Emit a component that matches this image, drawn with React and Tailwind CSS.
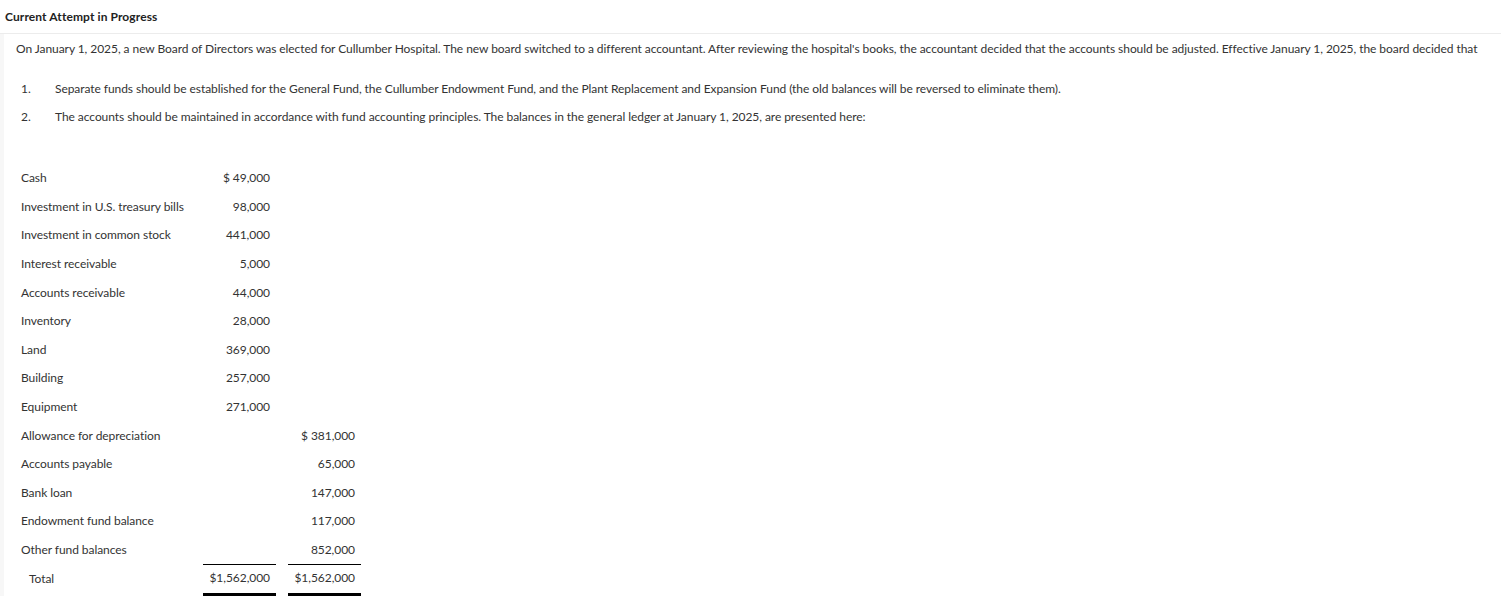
export default function App() {
  const rows = [
    ['Cash', '$ 49,000', ''],
    ['Investment in U.S. treasury bills', '98,000', ''],
    ['Investment in common stock', '441,000', ''],
    ['Interest receivable', '5,000', ''],
    ['Accounts receivable', '44,000', ''],
    ['Inventory', '28,000', ''],
    ['Land', '369,000', ''],
    ['Building', '257,000', ''],
    ['Equipment', '271,000', ''],
    ['Allowance for depreciation', '', '$ 381,000'],
    ['Accounts payable', '', '65,000'],
    ['Bank loan', '', '147,000'],
    ['Endowment fund balance', '', '117,000'],
    ['Other fund balances', '', '852,000'],
  ];

  return (
    <div className="min-h-screen bg-white text-[#333] font-['Lato','Noto_Sans',sans-serif] text-[12px] tracking-[-0.06px]">
      {/* Header */}
      <div className="h-[34px] pl-[5px] flex items-center border-b border-[#ececec]">
        <h2 className="font-bold text-[12px] text-[#222] tracking-[0.1px]">Current Attempt in Progress</h2>
      </div>

      <div className="border-l-4 border-[#f7f7f7] pl-[12px] pt-[7px]">
        <p className="leading-[16px]">
          On January 1, 2025, a new Board of Directors was elected for Cullumber Hospital. The new board switched to a different accountant. After reviewing the hospital's books, the accountant decided that the accounts should be adjusted. Effective January 1, 2025, the board decided that
        </p>

        <ol className="mt-[24px] pl-[5px] flex flex-col gap-[12px]">
          <li className="flex leading-[16px]">
            <span className="w-[34px]">1.</span>
            <span>Separate funds should be established for the General Fund, the Cullumber Endowment Fund, and the Plant Replacement and Expansion Fund (the old balances will be reversed to eliminate them).</span>
          </li>
          <li className="flex leading-[16px]">
            <span className="w-[34px]">2.</span>
            <span>The accounts should be maintained in accordance with fund accounting principles. The balances in the general ledger at January 1, 2025, are presented here:</span>
          </li>
        </ol>

        <table className="mt-[39px] border-separate border-spacing-0">
          <tbody>
            {rows.map(([label, a, b]) => (
              <tr key={label} className="h-[28.6px]">
                <td className="w-[187px] pl-[5px] align-middle">{label}</td>
                <td className="w-[73px] pr-[6px] text-right">{a}</td>
                <td className="w-[12px]"></td>
                <td className="w-[73px] pr-[6px] text-right">{b}</td>
              </tr>
            ))}
            <tr className="h-[32px]">
              <td className="pl-[13px] pb-[3px]">Total</td>
              <td className="pr-[6px] pb-[3px] text-right border-t border-b-[3px] border-black">$1,562,000</td>
              <td></td>
              <td className="pr-[6px] pb-[3px] text-right border-t border-b-[3px] border-black">$1,562,000</td>
            </tr>
          </tbody>
        </table>
      </div>
    </div>
  );
}
